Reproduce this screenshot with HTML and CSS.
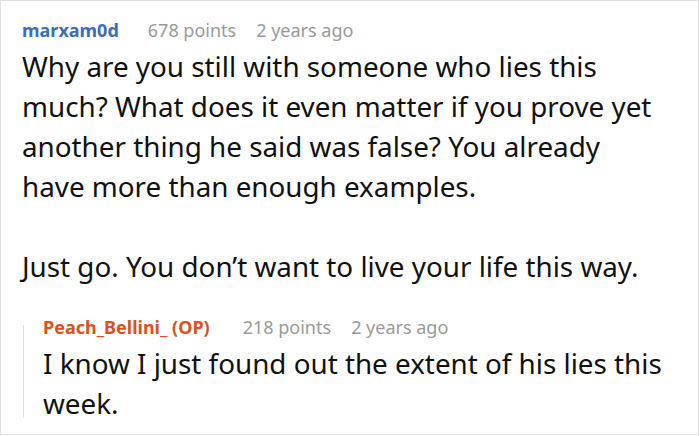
FILE: index.html
```html
<!DOCTYPE html>
<html>
<head>
<meta charset="utf-8">
<link rel="stylesheet" href="styles.css">
</head>
<body>
<div class="card">
  <div class="comment">
    <div class="meta">
      <span class="author">marxam0d</span>
      <span class="info">678 points</span>
      <span class="info">2 years ago</span>
    </div>
    <div class="text">
      <p>Why are you still with someone who lies this much? What does it even matter if you prove yet another thing he said was false? You already have more than enough examples.</p>
      <p>Just go. You don’t want to live your life this way.</p>
    </div>
    <div class="reply">
      <div class="thread-line"></div>
      <div class="reply-body">
        <div class="meta">
          <span class="author op">Peach_Bellini_ (OP)</span>
          <span class="info">218 points</span>
          <span class="info">2 years ago</span>
        </div>
        <div class="text">
          <p>I know I just found out the extent of his lies this week.</p>
        </div>
      </div>
    </div>
  </div>
</div>
</body>
</html>
```
FILE: styles.css
```css
html, body {
  margin: 0;
  padding: 0;
  background: #fff;
}
.card {
  width: 699px;
  height: 435px;
  box-sizing: border-box;
  border: 1px solid #e0e0e0;
  font-family: "Noto Sans", "Open Sans", sans-serif;
  overflow: hidden;
}
.comment {
  padding: 13px 0 0 21px;
}
.meta {
  display: flex;
  gap: 20px;
  font-size: 18px;
  line-height: 32px;
  white-space: nowrap;
}
.author {
  font-weight: 700;
  color: #3c6cb8;
  margin-right: 9px;
}
.author.op {
  color: #d6531e;
  margin-right: 13px;
}
.info {
  color: #9a9a9a;
}
.text {
  font-size: 27.8px;
  line-height: 40px;
  color: #111;
  width: 645px;
}
.text p {
  margin: 0 0 40px 0;
}
.text p:last-child {
  margin-bottom: 0;
}
.reply {
  margin-top: 25px;
  display: grid;
  grid-template-columns: 1px 1fr;
  column-gap: 20px;
}
.thread-line {
  margin: 14px 0 5px 1px;
  background: #dedede;
  width: 1px;
}
.reply .text {
  width: 640px;
}
```
